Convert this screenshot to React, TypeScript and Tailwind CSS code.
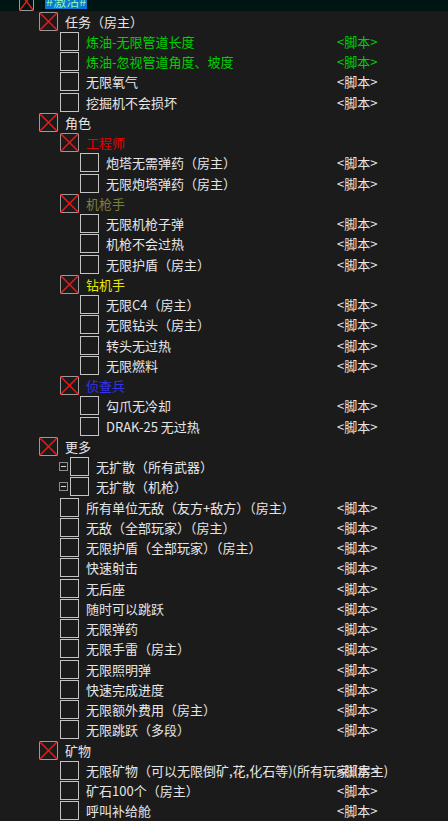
type Row = {
  level: 0 | 1 | 2 | 3;
  label: string;
  group?: boolean;
  color?: string;
  script?: boolean;
  expand?: boolean;
};

const rows: Row[] = [
  { level: 1, label: "任务（房主）", group: true },
  { level: 2, label: "炼油-无限管道长度", script: true, color: "text-[#00d000]" },
  { level: 2, label: "炼油-忽视管道角度、坡度", script: true, color: "text-[#00d000]" },
  { level: 2, label: "无限氧气", script: true },
  { level: 2, label: "挖掘机不会损坏", script: true },
  { level: 1, label: "角色", group: true },
  { level: 2, label: "工程师", group: true, color: "text-[#e60000]" },
  { level: 3, label: "炮塔无需弹药（房主）", script: true },
  { level: 3, label: "无限炮塔弹药（房主）", script: true },
  { level: 2, label: "机枪手", group: true, color: "text-[#7d7d3e]" },
  { level: 3, label: "无限机枪子弹", script: true },
  { level: 3, label: "机枪不会过热", script: true },
  { level: 3, label: "无限护盾（房主）", script: true },
  { level: 2, label: "钻机手", group: true, color: "text-[#e6e600]" },
  { level: 3, label: "无限C4（房主）", script: true },
  { level: 3, label: "无限钻头（房主）", script: true },
  { level: 3, label: "转头无过热", script: true },
  { level: 3, label: "无限燃料", script: true },
  { level: 2, label: "侦查兵", group: true, color: "text-[#3434ea]" },
  { level: 3, label: "勾爪无冷却", script: true },
  { level: 3, label: "DRAK-25 无过热", script: true },
  { level: 1, label: "更多", group: true },
  { level: 2, label: "无扩散（所有武器）", expand: true },
  { level: 2, label: "无扩散（机枪）", expand: true },
  { level: 2, label: "所有单位无敌（友方+敌方）（房主）", script: true },
  { level: 2, label: "无敌（全部玩家）（房主）", script: true },
  { level: 2, label: "无限护盾（全部玩家）（房主）", script: true },
  { level: 2, label: "快速射击", script: true },
  { level: 2, label: "无后座", script: true },
  { level: 2, label: "随时可以跳跃", script: true },
  { level: 2, label: "无限弹药", script: true },
  { level: 2, label: "无限手雷（房主）", script: true },
  { level: 2, label: "无限照明弹", script: true },
  { level: 2, label: "快速完成进度", script: true },
  { level: 2, label: "无限额外费用（房主）", script: true },
  { level: 2, label: "无限跳跃（多段）", script: true },
  { level: 1, label: "矿物", group: true },
  { level: 2, label: "无限矿物（可以无限倒矿,花,化石等)(所有玩家)(房主)", script: true },
  { level: 2, label: "矿石100个（房主）", script: true },
  { level: 2, label: "呼叫补给舱", script: true },
];

const indent: Record<number, string> = {
  0: "pl-[19px]",
  1: "pl-[39px]",
  2: "pl-[60px]",
  3: "pl-[80px]",
};

// rows are ~20.25px apart in the original; keep them on whole pixels
const rowHeight = (i: number) => (i % 4 === 3 ? "h-[21px]" : "h-[20px]");

const CrossBox = ({ w = 19 }: { w?: number }) => (
  <svg
    width={w}
    height="19"
    viewBox={`0 0 ${w} 19`}
    className="mt-px block shrink-0 self-start"
  >
    <rect x="0.5" y="0.5" width={w - 1} height="18" fill="none" stroke="#9a9a9a" shapeRendering="crispEdges" />
    <line x1="1" y1="1" x2={w - 1} y2="18" stroke="#f01818" strokeWidth="1.35" />
    <line x1={w - 1} y1="1" x2="1" y2="18" stroke="#f01818" strokeWidth="1.35" />
    <rect x="0" y="0" width="1" height="1" fill="#e01818" />
    <rect x={w - 1} y="0" width="1" height="1" fill="#e01818" />
    <rect x="0" y="18" width="1" height="1" fill="#e01818" />
    <rect x={w - 1} y="18" width="1" height="1" fill="#e01818" />
  </svg>
);

const EmptyBox = () => (
  <span className="mt-px h-[19px] w-[19px] shrink-0 self-start border border-[#c4c4c4] bg-[#1b1b1b]" />
);

const ExpandIcon = () => (
  <svg
    width="9"
    height="9"
    viewBox="0 0 9 9"
    className="block shrink-0"
    shapeRendering="crispEdges"
  >
    <rect x="0.5" y="0.5" width="8" height="8" fill="none" stroke="#8c8c8c" />
    <line x1="2" y1="4.5" x2="7" y2="4.5" stroke="#d8d8d8" />
  </svg>
);

const TreeRow = ({ row, index }: { row: Row; index: number }) => {
  const color = row.color ?? "text-[#e6e6e6]";
  return (
    <div className={`grid grid-cols-[337px_1fr] items-start ${rowHeight(index)}`}>
      <div
        className={`flex h-[20px] items-start whitespace-nowrap ${
          row.expand ? "pl-[59px]" : indent[row.level]
        }`}
      >
        {row.expand && (
          <span className="mr-[2px] mt-[6px] flex">
            <ExpandIcon />
          </span>
        )}
        {row.group ? <CrossBox /> : <EmptyBox />}
        <span className={`ml-[7px] mt-px ${color}`}>{row.label}</span>
      </div>
      <div className={`mt-px whitespace-nowrap ${color}`}>
        {row.script ? "<脚本>" : ""}
      </div>
    </div>
  );
};

export default function App() {
  return (
    <div
      className="h-[821px] w-[448px] overflow-hidden bg-[#1b1b1b] text-[13px] leading-[20px]"
      style={{ fontFamily: '"Noto Sans CJK SC", "Noto Sans", sans-serif' }}
    >
      <div className="mt-[-9px]">
        <div className="flex h-[20px] items-start bg-[#001512] pl-[19px]">
          <CrossBox w={15} />
          <span className="ml-[11px] mt-[1px] h-[17px] bg-[#0a78d4] px-[1px] leading-[17px] text-[#8ef5b4]">
            #激活#
          </span>
        </div>
        {rows.map((row, i) => (
          <TreeRow key={i} row={row} index={i} />
        ))}
      </div>
    </div>
  );
}
